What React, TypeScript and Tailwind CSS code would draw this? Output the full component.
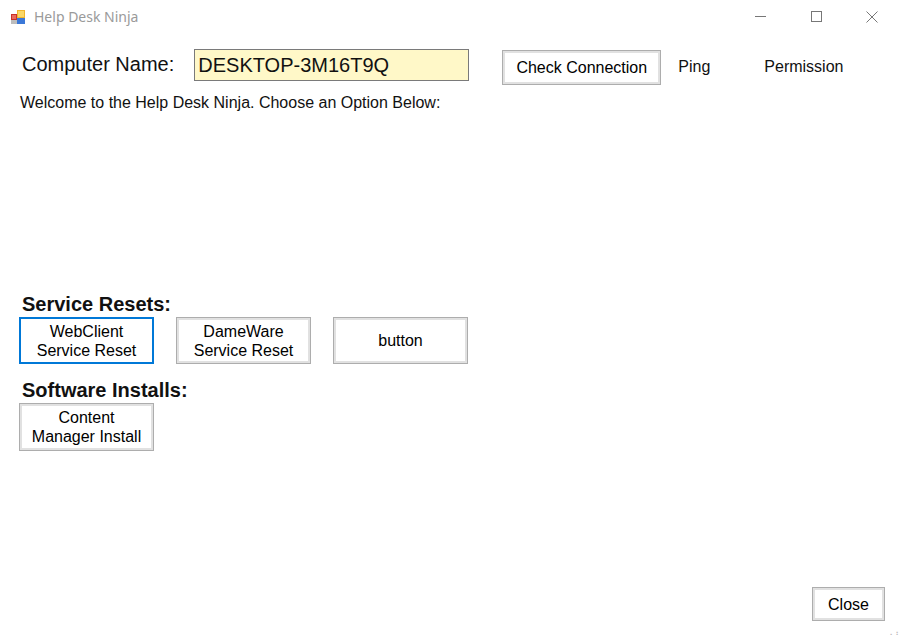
import React from "react";

const btn =
  "border border-[#adadad] bg-white shadow-[inset_0_0_0_2px_#e1e1e1] text-[#000] leading-[19px] flex items-center justify-center text-center";

function AppIcon() {
  return (
    <svg width="16" height="16" viewBox="0 0 16 16">
      <rect x="1" y="5" width="6" height="6" fill="#c8322a" />
      <rect x="2" y="6" width="4" height="4" fill="#e86a5c" />
      <rect x="7" y="1" width="8" height="8" fill="#f1b52c" />
      <rect x="8" y="2" width="6" height="6" fill="#fad766" />
      <rect x="7" y="9" width="8" height="6" fill="#3b78d8" />
      <rect x="1" y="11" width="6" height="4" fill="#bdbdbd" />
    </svg>
  );
}

export default function App() {
  return (
    <div
      className="w-[901px] h-[640px] bg-white flex flex-col relative overflow-hidden"
      style={{ fontFamily: '"Liberation Sans", Arial, sans-serif' }}
    >
      {/* Title bar */}
      <div className="h-[33px] flex items-center pl-[10px]">
        <AppIcon />
        <span className="ml-[8px] text-[14px] text-[#9a9a9a]" style={{ fontFamily: '"Noto Sans", "Segoe UI", sans-serif' }}>
          Help Desk Ninja
        </span>
        <div className="ml-auto flex items-center h-full text-[#555]">
          <div className="w-[46px] flex justify-center"><div className="w-[11px] h-px bg-[#777]" /></div>
          <div className="w-[46px] flex justify-center ml-[10px]"><div className="w-[11px] h-[11px] border border-[#777]" /></div>
          <div className="w-[46px] flex justify-center ml-[10px] mr-[6px]">
            <svg width="12" height="12" viewBox="0 0 12 12"><path d="M0.5 0.5L11.5 11.5M11.5 0.5L0.5 11.5" stroke="#777" /></svg>
          </div>
        </div>
      </div>

      {/* Computer row */}
      <div className="flex items-start mt-[16px] pl-[22px]">
        <span className="text-[20px] mt-[0px] text-[#111]">Computer Name:</span>
        <div className="ml-[20px] w-[275px] h-[32px] bg-[#fff8c8] border border-[#7a7a7a] text-[20px] pl-[3px] flex items-center text-[#111]">
          DESKTOP-3M16T9Q
        </div>
        <div className={`${btn} ml-[33px] mt-[1px] w-[159px] h-[35px] text-[16px]`}>Check Connection</div>
        <span className="ml-[17px] mt-[6px] text-[16px] text-[#111]">Ping</span>
        <span className="ml-[54px] mt-[6px] text-[16px] text-[#111]">Permission</span>
      </div>

      <div className="pl-[20px] mt-[6px] text-[16px] text-[#111]">
        Welcome to the Help Desk Ninja. Choose an Option Below:
      </div>

      {/* Service resets */}
      <div className="pl-[22px] mt-[178px] text-[20px] font-bold leading-[22px] text-[#111]">Service Resets:</div>
      <div className="flex pl-[19px] mt-[2px] gap-[22px] text-[16px]">
        <div className={`${btn} w-[135px] h-[47px] !border-2 !border-[#0078d7] shadow-none`}>WebClient<br />Service Reset</div>
        <div className={`${btn} w-[135px] h-[47px]`}>DameWare<br />Service Reset</div>
        <div className={`${btn} w-[135px] h-[47px]`}>button</div>
      </div>

      <div className="pl-[22px] mt-[15px] text-[20px] font-bold leading-[22px] text-[#111]">Software Installs:</div>
      <div className="flex pl-[19px] mt-[2px] text-[16px]">
        <div className={`${btn} w-[135px] h-[48px]`}>Content<br />Manager Install</div>
      </div>

      <div className="flex justify-end pr-[16px] mt-auto mb-[19px]">
        <div className={`${btn} w-[73px] h-[34px] text-[16px]`}>Close</div>
      </div>
      <div className="absolute right-[2px] bottom-[2px] text-[#bbb] text-[8px] leading-[8px]">⠠⠰</div>
    </div>
  );
}
